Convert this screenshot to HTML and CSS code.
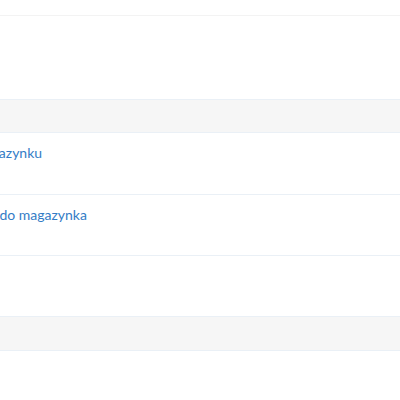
FILE: index.html
```html
<!DOCTYPE html>
<html lang="pl">
<head>
<meta charset="utf-8">
<link rel="stylesheet" href="styles.css">
</head>
<body>
<div class="topbar"></div>
<div class="spacer"></div>
<div class="table">
  <div class="thead"></div>
  <div class="row row-first"><a class="link" href="#">Wpis do magazynku</a></div>
  <div class="row"><a class="link" href="#">Przesunięcie do magazynka</a></div>
  <div class="row"></div>
  <div class="tfoot"></div>
</div>
</body>
</html>
```
FILE: styles.css
```css
html, body {
  margin: 0;
  padding: 0;
  background: #ffffff;
  font-family: Lato, "Open Sans", sans-serif;
  overflow: hidden;
}
.topbar {
  height: 15px;
  border-bottom: 1px solid #f3f3f3;
}
.spacer {
  height: 83px;
}
.table {
  display: flex;
  flex-direction: column;
}
.thead {
  height: 32px;
  background: #f6f6f6;
  border-top: 1px solid #eaf0f6;
  border-bottom: 1px solid #eaf0f6;
}
.tfoot {
  height: 33px;
  background: #f6f6f6;
  border-bottom: 1px solid #eaf0f6;
}
.row {
  height: 61px;
  border-bottom: 1px solid #eaf0f6;
  box-sizing: border-box;
  padding-top: 11px;
  white-space: nowrap;
}
.row-first {
  height: 62px;
}
.link {
  display: block;
  margin-left: -81px;
  font-size: 14px;
  line-height: 18px;
  color: #337cc6;
  text-decoration: none;
}
```
